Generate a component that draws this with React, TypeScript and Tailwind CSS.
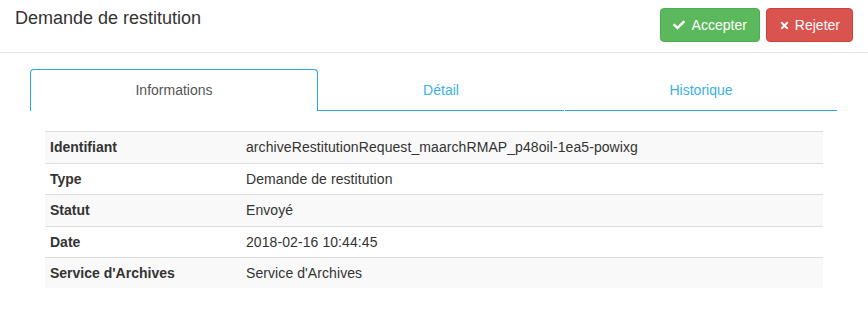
import React from "react";
import { FaCheck, FaTimes } from "react-icons/fa";

const rows: [string, string, string][] = [
  ["Identifiant", "archiveRestitutionRequest_maarchRMAP_p48oil-1ea5-powixg", "h-[32px]"],
  ["Type", "Demande de restitution", "h-[31px]"],
  ["Statut", "Envoyé", "h-[32px]"],
  ["Date", "2018-02-16 10:44:45", "h-[31px]"],
  ["Service d'Archives", "Service d'Archives", "h-[31px]"],
];

export default function App() {
  return (
    <div
      className="w-[868px] h-[323px] bg-white text-[#333] text-[14px] leading-[20px]"
      style={{ fontFamily: '"Liberation Sans", Arial, sans-serif' }}
    >
      <div className="flex items-start justify-between h-[53px] border-b border-[#e5e5e5] pl-[15px] pr-[15px]">
        <h1 className="text-[18px] leading-[20px] mt-[8px] font-normal">Demande de restitution</h1>
        <div className="flex gap-[6px] mt-[8px]">
          <button className="flex items-center gap-[7px] h-[34px] px-[12px] rounded-[4px] bg-[#5cb85c] border border-[#4cae4c] text-white">
            <FaCheck className="w-[12px] h-[12px]" />
            <span>Accepter</span>
          </button>
          <button className="flex items-center gap-[5px] h-[34px] px-[12px] rounded-[4px] bg-[#d9534f] border border-[#d43f3a] text-white">
            <FaTimes className="w-[11px] h-[11px]" />
            <span>Rejeter</span>
          </button>
        </div>
      </div>

      <div className="pl-[30px] pr-[31px] pt-[16px]">
        <div className="flex h-[42px]">
          <div className="w-[288px] flex items-center justify-center border border-b-0 border-[#29a9e1] rounded-t-[4px] text-[#555] pb-[1px]">
            Informations
          </div>
          <div className="w-[246px] flex items-center justify-center border-b border-[#29a9e1] text-[#3bb0e6]">
            Détail
          </div>
          <div className="flex-1 flex items-center justify-center border-b border-[#29a9e1] ml-[1px] text-[#3bb0e6]">
            Historique
          </div>
        </div>

        <div className="mt-[20px] ml-[15px] mr-[14px]">
          {rows.map(([label, value, h], i) => (
            <div
              key={label}
              className={`flex ${h} border-t border-[#ddd] ${i % 2 === 0 ? "bg-[#f9f9f9]" : "bg-white"}`}
            >
              <div className="w-[196px] px-[5px] pt-[5px] font-bold">{label}</div>
              <div className="flex-1 px-[5px] pt-[5px] tracking-[0.08px]">{value}</div>
            </div>
          ))}
        </div>
      </div>
    </div>
  );
}
